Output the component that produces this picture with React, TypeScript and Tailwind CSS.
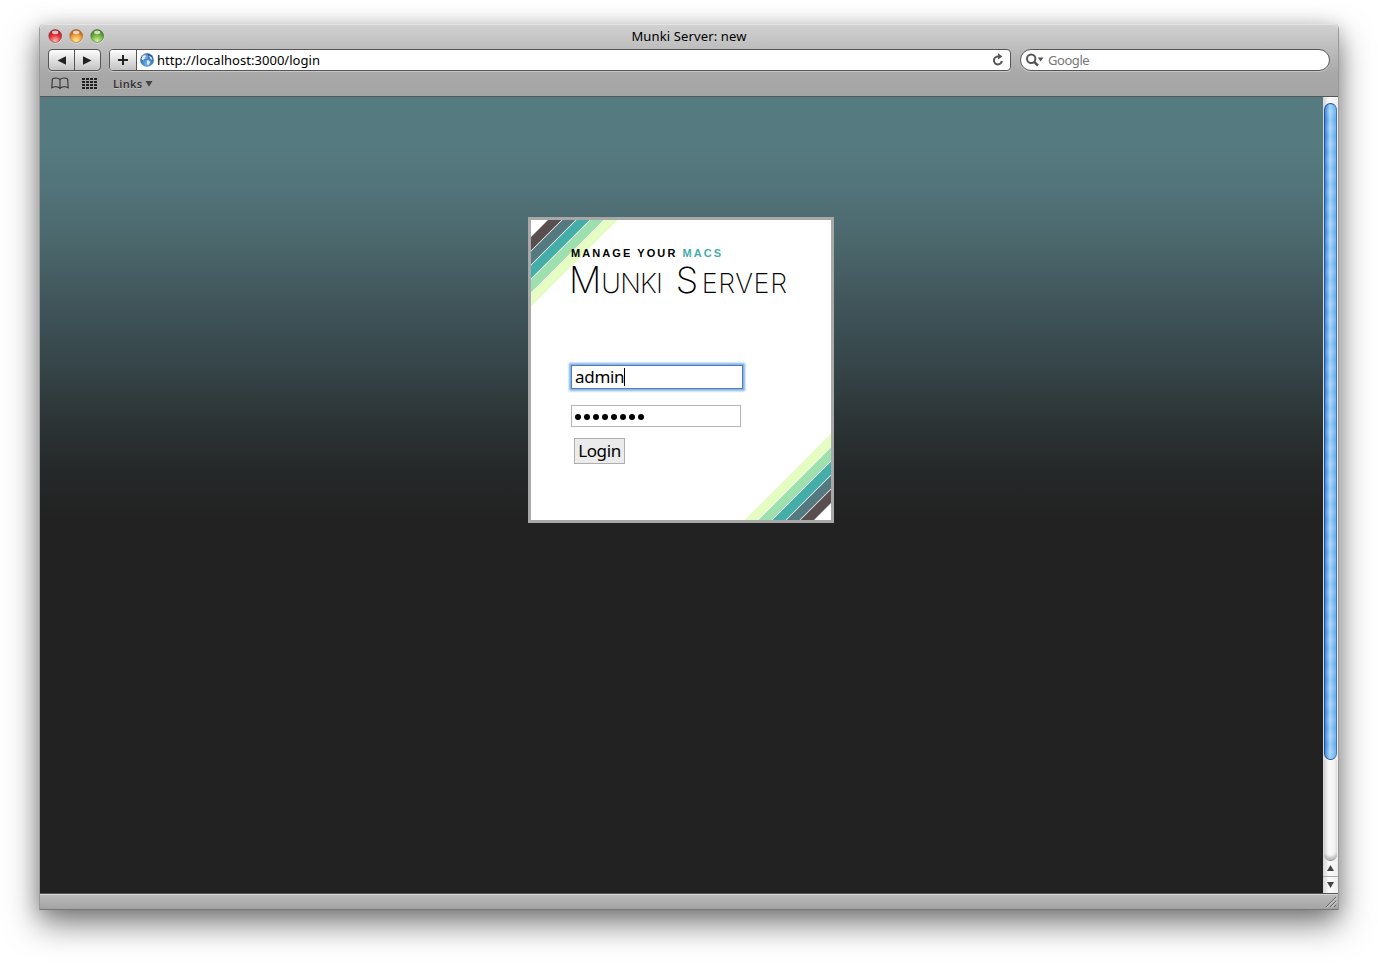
import React from "react";

const UI = "font-['Noto_Sans','Open_Sans',sans-serif]";

function Light({ id, edge, mid, glow }: { id: string; edge: string; mid: string; glow: string }) {
  return (
    <svg className="block h-[15px] w-[15px]" viewBox="0 0 15 15">
      <defs>
        <radialGradient id={id} cx="0.5" cy="0.9" r="0.85">
          <stop offset="0" stopColor={glow} />
          <stop offset="0.55" stopColor={mid} />
          <stop offset="1" stopColor={edge} />
        </radialGradient>
      </defs>
      <circle cx="7.5" cy="7.8" r="6.9" fill="#ffffff" opacity="0.4" />
      <circle cx="7.2" cy="7" r="6.4" fill={`url(#${id})`} stroke={edge} strokeWidth="0.8" strokeOpacity="0.75" />
      <ellipse cx="7.2" cy="3.3" rx="3.2" ry="1.9" fill="#fff" opacity="0.7" />
    </svg>
  );
}

const stripes = [
  { a: 17, b: 30.5, fill: "#594f4f" },
  { a: 31.5, b: 44.5, fill: "#547980" },
  { a: 45.5, b: 58.5, fill: "#45ada8" },
  { a: 59.5, b: 72.5, fill: "#9de0ad" },
  { a: 73.3, b: 86.5, fill: "#e5fcc2" },
];

function Corner({ className }: { className: string }) {
  return (
    <svg className={className} width="88" height="88" viewBox="0 0 88 88">
      {stripes.map((s) => (
        <polygon key={s.fill} points={`${s.a},0 ${s.b},0 0,${s.b} 0,${s.a}`} fill={s.fill} />
      ))}
    </svg>
  );
}

function Toolbar() {
  return (
    <header className="h-[73px] rounded-t-[5px] border-b border-[#555] bg-linear-to-b from-[#d2d2d2] via-[#a8a8a8] via-70% to-[#a5a5a5] shadow-[inset_0_1px_0_#e4e4e4]">
      <div className="grid h-[24px] grid-cols-[1fr_auto_1fr] items-center">
        <div className="flex gap-[6px] pl-2">
          <Light id="red" edge="#93232a" mid="#e8353b" glow="#ffc4c0" />
          <Light id="amber" edge="#a4561c" mid="#f0a03c" glow="#fff0a0" />
          <Light id="green" edge="#3f7420" mid="#74b544" glow="#d6f5a0" />
        </div>
        <h1 className="text-[13px] leading-[22px] tracking-[0.13px] text-black">Munki Server: new</h1>
      </div>
      <div className="flex h-[24px] items-start pl-2 pt-px">
        <div className="flex h-[22px] w-[53px] rounded-[4px] border border-[#555] bg-linear-to-b from-[#fdfdfd] to-[#c4c4c4] shadow-[0_1px_0_#c8c8c8]">
          <div className="flex w-[26px] items-center justify-center border-r border-[#555]">
            <svg width="9" height="9" viewBox="0 0 9 9"><path d="M0.500 4.500L9 0.200V8.800Z" fill="#222" /></svg>
          </div>
          <div className="flex flex-1 items-center justify-center">
            <svg width="9" height="9" viewBox="0 0 9 9"><path d="M8.500 4.500L0 0.200V8.800Z" fill="#222" /></svg>
          </div>
        </div>
        <div className="ml-2 flex h-[22px] w-[902px] overflow-hidden rounded-[4px] border border-[#555] bg-white shadow-[0_1px_0_#c8c8c8]">
          <div className="flex w-[27px] items-center justify-center border-r border-[#555] bg-linear-to-b from-[#fdfdfd] to-[#c4c4c4]">
            <svg width="10" height="10" viewBox="0 0 10 10"><path d="M5 0V10M0 5H10" stroke="#222" strokeWidth="2" /></svg>
          </div>
          <div className="flex flex-1 items-center pl-[3px] pr-[6px]">
            <svg width="14" height="14" viewBox="0 0 14 14">
              <defs>
                <radialGradient id="globe" cx="0.5" cy="0.75" r="0.7">
                  <stop offset="0" stopColor="#72b8f4" />
                  <stop offset="1" stopColor="#1c5299" />
                </radialGradient>
              </defs>
              <circle cx="7" cy="7" r="6.8" fill="url(#globe)" />
              <ellipse cx="5" cy="3.4" rx="3.2" ry="2.4" fill="#fff" opacity="0.35" />
              <path d="M1.500 5.500Q2.500 2.500 5 2L6 3.200 4.800 4.200 5.200 5.200 3.500 6.300 3.800 7.200 2 7ZM6.800 7.200L9.500 7.800 10 9.300 8.300 12.200 7.500 12 7.200 10ZM9 2.800L11.500 4.200 12.300 6.700 10.800 6.200 9.800 4.800Z" fill="#e0f2ff" />
            </svg>
            <span className="ml-[3px] flex-1 text-[13px] leading-5 tracking-[0.03px] text-black">http://localhost:3000/login</span>
            <svg width="12" height="14" viewBox="0 0 12 14">
              <path d="M7 3.400H5.800A4 4 0 1 0 9.900 8" fill="none" stroke="#555" strokeWidth="2" />
              <path d="M6 0.300L10.400 3.400 6 6.500Z" fill="#555" />
            </svg>
          </div>
        </div>
        <div className="ml-[9px] flex h-[22px] w-[310px] items-center rounded-full border border-[#555] bg-white pl-[5px] shadow-[0_1px_0_#c8c8c8]">
          <svg width="18" height="14" viewBox="0 0 18 14">
            <circle cx="5.200" cy="5.800" r="4.200" fill="none" stroke="#555" strokeWidth="2" />
            <path d="M8.200 8.800L12 12.600" stroke="#555" strokeWidth="2.600" />
            <path d="M11.800 4.500H17.500L14.600 8.500Z" fill="#555" />
          </svg>
          <span className="ml-[4px] text-[13px] leading-5 tracking-[-0.45px] text-[#777]">Google</span>
        </div>
      </div>
      <div className="flex h-[23px] items-center pl-[11px]">
        <svg width="18" height="13" viewBox="0 0 18 13" fill="none" stroke="#333" strokeWidth="1.1">
          <path d="M9 2.500Q7.500 1 5 1 2.500 1 1.300 2.200L.8 10.800Q2.500 9.700 5 9.800 8 9.900 9 11.500 10 9.900 13 9.800 15.500 9.700 17.200 10.800L16.700 2.200Q15.500 1 13 1 10.500 1 9 2.500V11.500" />
        </svg>
        <svg className="ml-[13px]" width="15" height="11" viewBox="0 0 15 11" fill="#222">
          {[0, 3, 6, 9].flatMap((y) => [0, 4, 8, 12].map((x) => <rect key={`${x}-${y}`} x={x} y={y} width="3" height="2" />))}
        </svg>
        <span className="ml-4 text-[11px] font-semibold leading-4 tracking-[0.3px] text-[#333] [text-shadow:0_1px_0_#c4c4c4]">Links</span>
        <svg className="ml-[2px]" width="8" height="6" viewBox="0 0 8 6"><path d="M.5 0H7.500L4 5.800Z" fill="#444" /></svg>
      </div>
    </header>
  );
}

function LoginCard() {
  return (
    <section className="relative mt-[120px] h-[306px] w-[306px] border-[3px] border-[#a8a8a8] bg-white pl-10">
      <Corner className="absolute left-0 top-0" />
      <Corner className="absolute bottom-0 right-0 rotate-180" />
      <div className="relative">
        <p className="whitespace-nowrap pt-[26px] font-['Liberation_Sans',Arial,sans-serif] text-[11px] font-bold leading-[14px] tracking-[2.08px] text-black">
          MANAGE YOUR <span className="text-[#45ada8]">MACS</span>
        </p>
        <h2 className="-ml-[2px] h-[40px] whitespace-nowrap font-[Inter,Lato,sans-serif] text-[36px] font-extralight leading-[40px] text-black [word-spacing:3.6px]">
          M<span className="text-[27px] tracking-[-0.8px]">UNKI</span> <span className="tracking-[3.5px]">S</span>
          <span className="text-[27px] tracking-[0.6px]">ERVER</span>
        </h2>
        <div className="mt-[65px] flex h-[24px] w-[172px] items-center border border-[#4f7fb5] bg-white pl-[3px] shadow-[0_0_2px_2px_#7fb2e6]">
          <span className="text-[17px] leading-[22px] tracking-[-0.3px] text-black">admin</span>
          <span className="h-[18px] w-px bg-black" />
        </div>
        <div className="mt-[16px] flex h-[22px] w-[170px] items-center gap-[3px] border border-[#b5b5b5] bg-white pl-[3px] pt-[2px]">
          {Array.from({ length: 8 }, (_, i) => (
            <span key={i} className="size-[6px] rounded-full bg-black" />
          ))}
        </div>
        <button className="ml-[3px] mt-[11px] flex h-[26px] w-[51px] items-center justify-center border border-[#adadad] bg-[#ebebeb] text-[17px] leading-[22px] tracking-[-0.4px] text-black">
          Login
        </button>
      </div>
    </section>
  );
}

function Scrollbar() {
  return (
    <aside className="flex w-[15px] flex-col items-center bg-linear-to-r from-[#d5d5d5] via-[#fafafa] via-40% to-[#efefef]">
      <div className="mt-[6px] h-[657px] w-[13px] rounded-full border border-[#24509a] border-r-[#4c6f9e] bg-linear-to-r from-[#2a76d2] via-[#a9d8fb] via-45% to-[#5aaaf4]">
        <div className="h-full w-full rounded-full bg-[repeating-linear-gradient(to_bottom,#5fb0f530_0px,#d0ecff30_8px,#5fb0f530_16px)]" />
      </div>
      <div className="h-[101px] w-[13px] rounded-b-full border-b border-[#888] shadow-[inset_0_-3px_3px_#bbb]" />
      <div className="flex h-[16px] w-full items-center justify-center border-b border-[#aaa] pb-[2px]">
        <svg width="7" height="6" viewBox="0 0 7 6"><path d="M3.500 0L7 6H0Z" fill="#444" /></svg>
      </div>
      <div className="flex h-[16px] w-full items-center justify-center">
        <svg width="7" height="6" viewBox="0 0 7 6"><path d="M3.500 6L7 0H0Z" fill="#444" /></svg>
      </div>
    </aside>
  );
}

export default function App() {
  return (
    <div className={`h-[964px] w-[1378px] overflow-hidden bg-white pl-[39px] pt-[24px] ${UI}`}>
      <div className="flex h-[886px] w-[1300px] flex-col rounded-t-[5px] border-x border-[#999] shadow-[0_14px_32px_rgba(0,0,0,0.5),0_2px_18px_rgba(0,0,0,0.16)]">
        <Toolbar />
        <main className="flex h-[796px]">
          <div className="flex flex-1 justify-center bg-[#222] bg-[linear-gradient(to_bottom,#557a80_50px,#52747a_90px,#4a666b_150px,#40555a_205px,#36464a_265px,#2c3435_325px,#252829_375px,#222222_425px)] pr-px">
            <LoginCard />
          </div>
          <Scrollbar />
        </main>
        <footer className="flex h-[17px] items-end justify-end border-b border-t border-b-[#777] border-t-[#555] bg-linear-to-b from-[#bcbcbc] to-[#a3a3a3] shadow-[inset_0_1px_0_#d8d8d8]">
          <svg width="14" height="14" viewBox="0 0 14 14" fill="none">
            <path d="M2 12L12 2M6 12L12 6M10 12L12 10" stroke="#666" />
            <path d="M3 12.500L12.500 3M7 12.500L12.500 7" stroke="#ddd" strokeWidth="0.8" />
          </svg>
        </footer>
      </div>
    </div>
  );
}
